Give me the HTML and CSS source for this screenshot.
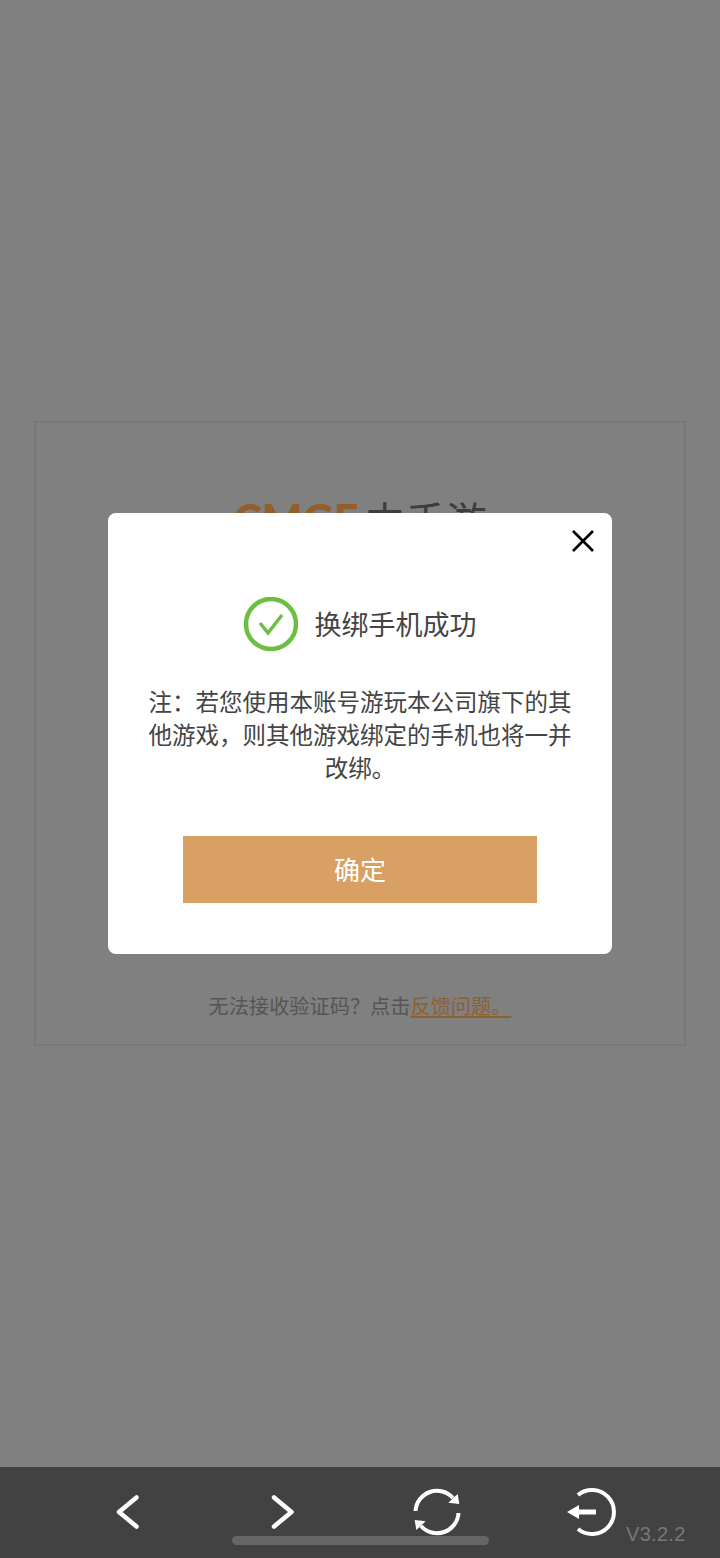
FILE: index.html
```html
<!DOCTYPE html>
<html lang="zh-CN">
<head>
    <meta charset="UTF-8">
    <meta name="viewport" content="width=device-width, initial-scale=1.0">
    <title>换绑手机</title>
    <link rel="stylesheet" href="styles.css">
</head>
<body>
    <div class="page">
        <div class="content">
            <div class="card">
                <div class="logo"><span class="logo-en">CMGE</span><span class="logo-cn">中手游</span></div>
                <p class="help">无法接收验证码&#xFF1F;点击<a class="help-link" href="#">反馈问题。</a></p>
            </div>
        </div>
        <div class="toolbar">
            <svg class="tool" width="28" height="36" viewBox="0 0 28 36">
                <path d="M21.5 3.5 L4 18 L21.5 32.5" />
            </svg>
            <svg class="tool tool-forward" width="28" height="36" viewBox="0 0 28 36">
                <path d="M5 3.5 L22.5 18 L5 32.5" />
            </svg>
            <svg class="tool tool-refresh" width="50" height="50" viewBox="0 0 50 50">
                <path class="thin" d="M3.5 24 A21.5 21.5 0 0 1 41 11" />
                <path class="thin" d="M46.5 26 A21.5 21.5 0 0 1 9 39" />
                <path class="fill" d="M36.3 15.7 L47.3 17 L45.7 7 Z" />
                <path class="fill" d="M13.7 34.3 L2.7 33 L4.3 43 Z" />
            </svg>
            <svg class="tool tool-exit" width="54" height="50" viewBox="0 0 54 50">
                <path class="thin" d="M13 8 A22 22 0 1 1 13 42" />
                <path class="shaft" d="M14 25 H31" />
                <path class="fill" d="M2 25 L14 18 V32 Z" />
            </svg>
            <span class="version">V3.2.2</span>
        </div>
    </div>

    <div class="overlay">
        <div class="modal">
            <svg class="close" width="24" height="24" viewBox="0 0 24 24">
                <path d="M2 2 L22 22 M22 2 L2 22" />
            </svg>
            <div class="modal-title">
                <svg class="success" width="54" height="54" viewBox="0 0 54 54">
                    <circle cx="27" cy="27" r="25" />
                    <path d="M16 26 L24 36 L38 18" />
                </svg>
                <span class="title-text">换绑手机成功</span>
            </div>
            <p class="note">注&#xFF1A;若您使用本账号游玩本公司旗下的其他游戏&#xFF0C;则其他游戏绑定的手机也将一并改绑。</p>
            <button class="confirm" type="button">确定</button>
        </div>
    </div>

    <div class="home-bar"></div>
</body>
</html>
```

FILE: styles.css
```css
* {
    box-sizing: border-box;
}
body {
    margin: 0;
    font-family: "Liberation Sans", "Noto Sans CJK SC", sans-serif;
    background-color: #808080;
}
.page {
    display: flex;
    flex-direction: column;
    height: 1558px;
}
.content {
    flex: 1;
    padding: 421px 34px 0;
}
.card {
    height: 625px;
    border: 2px solid #787878;
    padding-top: 74px;
    text-align: center;
}
.logo {
    display: flex;
    justify-content: center;
    align-items: center;
    gap: 6px;
    height: 44px;
}
.logo-en {
    font-family: Lato, sans-serif;
    font-size: 43px;
    font-weight: 900;
    color: #935e2b;
}
.logo-cn {
    font-size: 40.7px;
    color: #3d3d3d;
}
.help {
    margin: 451px 0 0;
    font-size: 20.2px;
    line-height: 30px;
    color: #555;
}
.help-link {
    color: #8e5f30;
}
.toolbar {
    display: flex;
    align-items: center;
    height: 91px;
    padding: 0 0 1px 115px;
    background-color: #424242;
}
.tool path {
    fill: none;
    stroke: #fff;
    stroke-width: 4.5px;
    stroke-linecap: round;
    stroke-linejoin: round;
}
.tool .thin {
    stroke-width: 4px;
    stroke-linecap: butt;
}
.tool .shaft {
    stroke-width: 5px;
    stroke-linecap: butt;
}
.tool .fill {
    fill: #fff;
    stroke: none;
}
.tool-forward {
    margin-left: 126px;
}
.tool-refresh {
    margin-left: 115px;
}
.tool-exit {
    margin-left: 103px;
}
.version {
    align-self: flex-end;
    margin: 0 0 11px 7px;
    font-size: 20px;
    letter-spacing: 0.3px;
    color: #777;
}
.overlay {
    position: absolute;
    top: 513px;
    left: 108px;
}
.modal {
    position: relative;
    width: 504px;
    height: 441px;
    padding-top: 83px;
    background-color: #fff;
    border-radius: 8px;
}
.close {
    position: absolute;
    top: 16px;
    right: 17px;
}
.close path {
    fill: none;
    stroke: #000;
    stroke-width: 2.6px;
}
.modal-title {
    display: flex;
    justify-content: center;
    align-items: center;
    gap: 17px;
    height: 56px;
    font-size: 27px;
    color: #444;
}
.title-text {
    margin-bottom: 2px;
}
.success circle,
.success path {
    fill: none;
    stroke: #6fbe44;
}
.success circle {
    stroke-width: 4.5px;
}
.success path {
    stroke-width: 3.5px;
}
.note {
    margin: 35px 0 0;
    padding: 0 40px;
    font-size: 23.5px;
    line-height: 33px;
    text-align: center;
    color: #444;
}
.confirm {
    display: block;
    width: 354px;
    height: 67px;
    margin: 50px auto 0;
    padding: 0 0 2px;
    border: none;
    background-color: #d9a064;
    font-family: inherit;
    font-size: 26px;
    color: #fff;
}
.home-bar {
    position: absolute;
    top: 1536px;
    left: 232px;
    width: 257px;
    height: 9px;
    border-radius: 5px;
    background-color: #666;
}
```
